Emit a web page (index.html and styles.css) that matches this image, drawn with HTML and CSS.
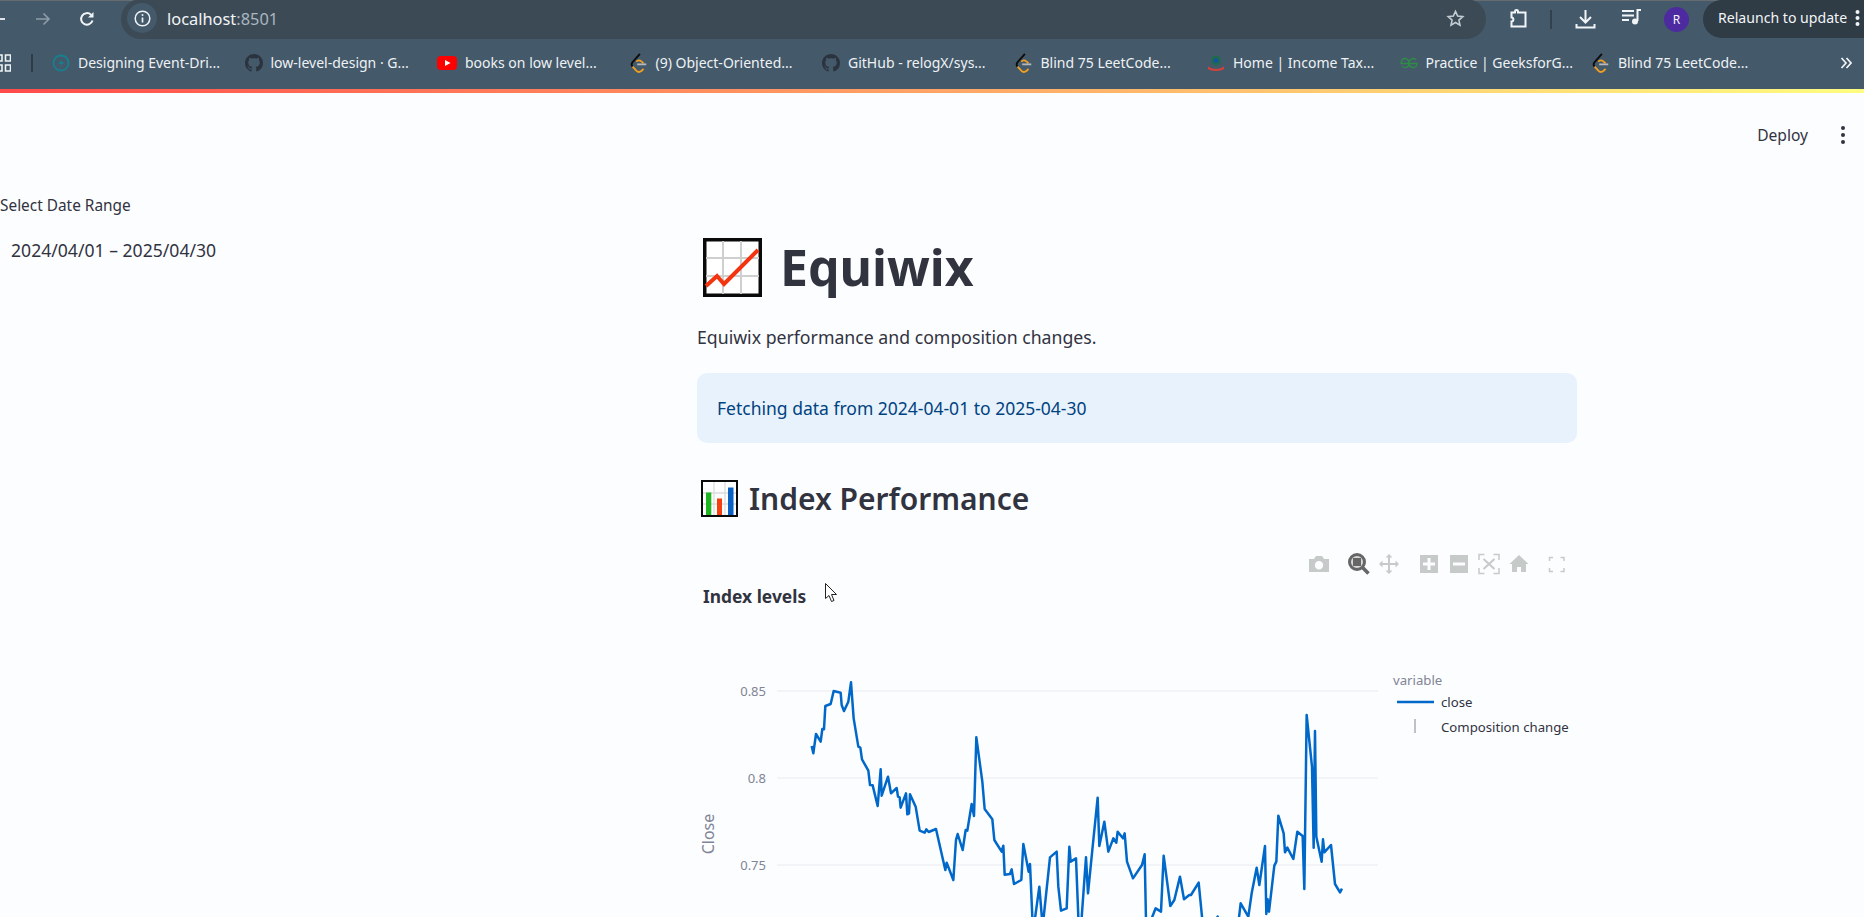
FILE: index.html
```html
<!DOCTYPE html>
<html lang="en">
<head>
    <meta charset="UTF-8">
    <meta name="viewport" content="width=device-width, initial-scale=1.0">
    <title>Equiwix</title>
    <link rel="stylesheet" href="styles.css">
</head>
<body>
    <svg class="defs" width="0" height="0">
        <symbol id="ic-github" viewBox="0 0 16 16">
            <path fill="#2b333f" d="M8 0C3.58 0 0 3.58 0 8c0 3.54 2.29 6.53 5.47 7.59.4.07.55-.17.55-.38 0-.19-.01-.82-.01-1.49-2.01.37-2.53-.49-2.69-.94-.09-.23-.48-.94-.82-1.13-.28-.15-.68-.52-.01-.53.63-.01 1.08.58 1.23.82.72 1.21 1.87.87 2.33.66.07-.52.28-.87.51-1.07-1.78-.2-3.64-.89-3.64-3.95 0-.87.31-1.59.82-2.15-.08-.2-.36-1.02.08-2.12 0 0 .67-.21 2.2.82.64-.18 1.32-.27 2-.27.68 0 1.36.09 2 .27 1.53-1.04 2.2-.82 2.2-.82.44 1.1.16 1.92.08 2.12.51.56.82 1.27.82 2.15 0 3.07-1.87 3.75-3.65 3.95.29.25.54.73.54 1.48 0 1.07-.01 1.93-.01 2.2 0 .21.15.46.55.38A8.013 8.013 0 0016 8c0-4.42-3.58-8-8-8z"/>
        </symbol>
        <symbol id="ic-leet" viewBox="0 0 18 22">
            <path d="M10 1 2 10c-1.5 1.8-1.5 3.4 0 5" fill="none" stroke="#0c0c0c" stroke-width="2"/>
            <path d="M2 15l4 4.500c1.600 1.600 4 1.600 6 0l2-2" fill="none" stroke="#f0a020" stroke-width="2"/>
            <path d="M6 9.500c1.500-1.600 4-1.600 6 0l2 2" fill="none" stroke="#f0a020" stroke-width="2"/>
            <path d="M7 12.500h10" stroke="#b4b8bc" stroke-width="2"/>
        </symbol>
    </svg>

    <div class="window">
        <header class="chrome">
            <div class="toolbar">
                <svg class="tb-back" width="6" height="16" viewBox="0 0 6 16"><path d="M0 8h5" stroke="#eef2f5" stroke-width="1.800"/></svg>
                <svg class="tb-forward" width="16" height="16" viewBox="0 0 16 16"><path d="M1 8h13M8.500 2.500 14 8l-5.500 5.500" fill="none" stroke="#8f9ca8" stroke-width="1.600"/></svg>
                <svg class="tb-reload" width="16" height="16" viewBox="0 0 16 16"><path d="M13.500 9.500A5.800 5.800 0 1 1 12 3.800" fill="none" stroke="#f2f5f7" stroke-width="2"/><path d="M14.500 1v5.500H9z" fill="#f2f5f7"/></svg>
                <div class="omnibox">
                    <span class="site-info">
                        <svg width="17" height="17" viewBox="0 0 17 17"><circle cx="8.500" cy="8.500" r="7.300" fill="none" stroke="#f0f3f5" stroke-width="1.500"/><path d="M8.500 7.500v5" stroke="#f0f3f5" stroke-width="1.700"/><circle cx="8.500" cy="5" r="1" fill="#f0f3f5"/></svg>
                    </span>
                    <span class="url">localhost<span class="url-port">:8501</span></span>
                    <svg class="star" width="19" height="19" viewBox="0 0 24 24"><path d="M12 3l2.700 6 6.500.7-4.900 4.300 1.400 6.400-5.700-3.300-5.700 3.300 1.400-6.400L2.800 9.700 9.300 9z" fill="none" stroke="#c3ccd3" stroke-width="2"/></svg>
                </div>
                <svg class="tb-ext" width="20" height="20" viewBox="0 0 19 20"><path d="M6.500 3.500V2.300c0-1.600 3-1.600 3 0v1.200h7.500v14H3v-5c2.500 0 2.500-4 0-4v-5z" fill="none" stroke="#f2f5f7" stroke-width="2"/></svg>
                <span class="tb-divider"></span>
                <svg class="tb-download" width="21" height="21" viewBox="0 0 21 21"><path d="M10.500 1v12M5 8l5.500 5.500L16 8" fill="none" stroke="#f2f5f7" stroke-width="2"/><path d="M1.500 15v3.500h18V15" fill="none" stroke="#f2f5f7" stroke-width="2"/></svg>
                <svg class="tb-music" width="19" height="16" viewBox="0 0 19 16"><path d="M0 2h12M0 6.500h12M0 11h7" stroke="#f2f5f7" stroke-width="2"/><path d="M15.500 12V1H19" fill="none" stroke="#f2f5f7" stroke-width="2"/><circle cx="13" cy="12.500" r="3" fill="#f2f5f7"/></svg>
                <span class="avatar">R</span>
                <div class="relaunch">
                    <span>Relaunch to update</span>
                    <svg width="5" height="18" viewBox="0 0 5 18"><circle cx="2.500" cy="3" r="2" fill="#f2f5f7"/><circle cx="2.500" cy="9" r="2" fill="#f2f5f7"/><circle cx="2.500" cy="15" r="2" fill="#f2f5f7"/></svg>
                </div>
            </div>

            <nav class="bookmarks">
                <svg class="apps" width="11" height="18" viewBox="0 0 11 18"><path d="M-4 1h6v6h-6zM5.500 1h5v6h-5zM-4 11h6v6h-6zM5.500 11h5v6h-5z" fill="none" stroke="#eef2f5" stroke-width="1.600"/></svg>
                <span class="bm-divider"></span>
                <div class="bm-list">
                    <a class="bookmark">
                        <svg width="18" height="18" viewBox="0 0 18 18"><circle cx="9" cy="9" r="7.500" fill="none" stroke="#16808f" stroke-width="1.800"/><path d="M10.500 4 6.500 10h3l-1.500 4 4-6H9z" fill="#16808f"/></svg>
                        <span>Designing Event-Dri...</span>
                    </a>
                    <a class="bookmark">
                        <svg width="18" height="18"><use href="#ic-github"/></svg>
                        <span>low-level-design · G...</span>
                    </a>
                    <a class="bookmark">
                        <svg width="20" height="18" viewBox="0 0 20 18"><rect y="2" width="20" height="14" rx="4" fill="#f00"/><path d="M8 6l5.500 3L8 12z" fill="#fff"/></svg>
                        <span>books on low level...</span>
                    </a>
                    <a class="bookmark">
                        <svg width="18" height="20"><use href="#ic-leet"/></svg>
                        <span>(9) Object-Oriented...</span>
                    </a>
                    <a class="bookmark">
                        <svg width="18" height="18"><use href="#ic-github"/></svg>
                        <span>GitHub - relogX/sys...</span>
                    </a>
                    <a class="bookmark">
                        <svg width="18" height="20"><use href="#ic-leet"/></svg>
                        <span>Blind 75 LeetCode...</span>
                    </a>
                    <a class="bookmark">
                        <svg width="18" height="18" viewBox="0 0 18 18"><circle cx="9" cy="6.500" r="5" fill="#1c6e4a"/><circle cx="9" cy="6.500" r="2.500" fill="#1d4fa0"/><path d="M1 12c2 4 14 4 16 0v3c-3 2.500-13 2.500-16 0z" fill="#d8403a"/></svg>
                        <span>Home | Income Tax...</span>
                    </a>
                    <a class="bookmark">
                        <svg width="18" height="18" viewBox="0 0 18 18"><path d="M9 9.500h8c-.3 3-2 4-3.800 4-2.200 0-4.200-2-4.200-4.500S7 4.500 4.800 4.500C3 4.500 1.300 5.500 1 9.500h8M9 9c0-2.500 2-4.500 4.200-4.500 1.200 0 2.300.5 3 1.500M9 9.500c0 2.500-2 4-4.200 4-1.200 0-2.300-.5-3-1.500" fill="none" stroke="#2f8d46" stroke-width="1.300"/></svg>
                        <span>Practice | GeeksforG...</span>
                    </a>
                    <a class="bookmark">
                        <svg width="18" height="20"><use href="#ic-leet"/></svg>
                        <span>Blind 75 LeetCode...</span>
                    </a>
                </div>
                <svg class="bm-more" width="12" height="12" viewBox="0 0 12 12"><path d="M1.500 1 6 6l-4.500 5M6.500 1 11 6l-4.500 5" fill="none" stroke="#f2f5f7" stroke-width="1.700"/></svg>
            </nav>
        </header>

        <div class="decoration"></div>

        <div class="page">
            <div class="app-header">
                <span class="deploy">Deploy</span>
                <svg class="app-menu" width="6" height="18" viewBox="0 0 6 18"><circle cx="3" cy="2" r="2" fill="#31333f"/><circle cx="3" cy="9" r="2" fill="#31333f"/><circle cx="3" cy="16" r="2" fill="#31333f"/></svg>
            </div>

            <div class="app-body">
                <aside class="sidebar">
                    <label class="date-label">Select Date Range</label>
                    <div class="date-value">2024/04/01 – 2025/04/30</div>
                </aside>

                <main class="content">
                    <h1 class="title">
                        <svg class="title-emoji" width="59" height="59" viewBox="0 0 59 59">
                            <rect x="1.750" y="1.750" width="55.500" height="55.500" fill="#fff" stroke="#0a0a0a" stroke-width="3.500"/>
                            <path d="M20 3v53M38 3v53M3 20h53M3 38h53" stroke="#cfcfcf" stroke-width="2"/>
                            <path d="M3 48 14 38l7 8L55 12" fill="none" stroke="#f4330f" stroke-width="4"/>
                        </svg>
                        Equiwix
                    </h1>
                    <p class="subtitle">Equiwix performance and composition changes.</p>
                    <div class="info-box">Fetching data from 2024-04-01 to 2025-04-30</div>
                    <h2 class="section">
                        <svg class="section-emoji" width="37" height="37" viewBox="0 0 37 37">
                            <rect x="1" y="1" width="35" height="35" fill="#fff" stroke="#0a0a0a" stroke-width="2"/>
                            <path d="M13 2v33M24 2v33M2 13h33M2 24h33" stroke="#dcdcdc" stroke-width="1.300"/>
                            <rect x="5" y="12.500" width="5.300" height="22.500" fill="#1fb51f"/>
                            <rect x="16" y="18.500" width="5" height="16.500" fill="#f4400f"/>
                            <rect x="27" y="7.500" width="5.500" height="27.500" fill="#0a63c4"/>
                        </svg>
                        Index Performance
                    </h2>

                    <svg class="chart" width="880" height="400" viewBox="0 0 880 400">
                        <!-- modebar -->
                        <g class="modebar">
                            <path fill-rule="evenodd" d="M612 19h5l2-3h6l2 3h5v13h-20zM622 21a4.200 4.200 0 1 0 0 8.400 4.200 4.200 0 0 0 0-8.400z"/>
                            <path d="M692 14l3.500 3.500h-2.500v5.500h5.500v-2.500l3.500 3.500-3.500 3.500v-2.500h-5.500v5.500h2.500l-3.500 3.500-3.500-3.500h2.500v-5.500h-5.500v2.500l-3.500-3.500 3.500-3.500v2.500h5.500v-5.500h-2.500z"/>
                            <path fill-rule="evenodd" d="M723 15h18v18h-18zM730.500 18v4.500H726v3h4.500V30h3v-4.500h4.500v-3h-4.500V18z"/>
                            <path fill-rule="evenodd" d="M753 15h18v18h-18zM756 22.500v3h12v-3z"/>
                            <path d="M822 15l9.500 9h-2.500v8h-5v-5h-4v5h-5v-8h-2.500z"/>
                        </g>
                        <g class="modebar-outline">
                            <path d="M782 20v-5.500h5.500M796.500 14.500h5.500V20M802 28v5.500h-5.500M787.500 33.500H782V28"/>
                            <path d="M852.500 21v-3.500h3.500M863.500 17.500h3.500V21M867 28v3.500h-3.500M856 31.500h-3.500V28"/>
                        </g>
                        <path class="modebar-x" d="M786.500 19l11 10M797.500 19l-11 10"/>
                        <circle cx="660" cy="22" r="7.500" fill="#d8d8d8" stroke="#666" stroke-width="3"/>
                        <rect x="656" y="18" width="8" height="8" fill="#666"/>
                        <path d="M665.500 27.500l6 6" stroke="#666" stroke-width="3.500"/>

                        <text class="chart-title" x="6" y="63">Index levels</text>

                        <!-- grid -->
                        <path class="grid" d="M80 151h601M80 238h601M80 325h601"/>
                        <text class="tick" x="69" y="156">0.85</text>
                        <text class="tick" x="69" y="243">0.8</text>
                        <text class="tick" x="69" y="330">0.75</text>
                        <text class="axis-title" transform="translate(17 294) rotate(-90)">Close</text>

                        <!-- line, points taken at 3x so they are scaled back down -->
                        <polyline class="series" transform="translate(-7 120) scale(.33333)" points="365,258 370,280 378,222 392,245 397,207 402,208 406,138 422,132 431,93 452,98 455,135 462,153 475,125 483,67 491,175 505,260 511,263 516,298 535,332 540,375 548,376 563,438 572,328 575,407 594,350 603,400 620,384 624,410 629,412 632,443 648,400 652,463 657,460 660,403 677,440 689,512 704,518 709,508 716,516 738,507 766,630 770,608 790,660 798,540 803,522 818,570 827,510 832,512 845,432 852,468 859,232 877,365 884,447 907,478 913,540 935,575 940,557 944,644 960,642 965,628 972,672 994,660 1000,552 1016,635 1020,612 1027,770 1033,790 1048,680 1058,800 1080,592 1100,575 1105,680 1113,752 1130,745 1138,560 1142,605 1158,595 1165,770 1173,800 1188,592 1194,700 1208,560 1223,413 1228,558 1243,485 1255,575 1270,535 1279,548 1283,515 1299,535 1304,520 1311,605 1329,655 1356,615 1364,583 1368,780 1378,790 1385,775 1397,745 1413,755 1421,587 1441,738 1453,720 1470,650 1482,718 1498,705 1503,705 1526,668 1536,770 1545,800 1570,790 1583,770 1590,800 1630,800 1645,790 1652,730 1675,770 1685,700 1700,623 1708,675 1725,558 1729,762 1733,718 1737,755 1753,617 1759,605 1765,467 1781,520 1785,577 1792,563 1810,597 1822,515 1838,528 1843,687 1850,165 1866,320 1871,563 1875,213 1879,530 1895,605 1899,538 1903,577 1923,555 1935,672 1950,697 1956,686"/>

                        <!-- legend -->
                        <text class="legend-title" x="696" y="145">variable</text>
                        <path class="legend-line" d="M700 162h37"/>
                        <text class="legend-item" x="744" y="167">close</text>
                        <path class="legend-tick" d="M718 179v14"/>
                        <text class="legend-item" x="744" y="192">Composition change</text>

                        <!-- mouse pointer -->
                        <path class="pointer" d="M128.500 43.500v15l3.500-3 2.500 6 2.500-1-2.500-6h5z"/>
                    </svg>
                </main>
            </div>
        </div>
    </div>
</body>
</html>
```
FILE: styles.css
```css
* {
    box-sizing: border-box;
}

html, body {
    margin: 0;
    height: 100%;
    overflow: hidden;
}
body {
    font-family: "Noto Sans", sans-serif;
    color: #31333f;
    background: #fcfdff;
}

.defs {
    position: absolute;
}
.window {
    display: flex;
    flex-direction: column;
    height: 100vh;
    overflow: hidden;
}

/* browser chrome */
.chrome {
    background: #44596a;
    color: #f2f5f7;
}
.toolbar {
    display: flex;
    align-items: center;
    height: 39px;
    padding-bottom: 2px;
    border-top: 1px solid #666b70;
}
.toolbar > svg {
    flex: none;
}
.tb-forward {
    margin-left: 29px;
}
.tb-reload {
    margin-left: 28px;
}
.omnibox {
    display: flex;
    align-items: center;
    align-self: flex-start;
    width: 1365px;
    height: 40px;
    margin-top: -2px;
    margin-left: 26px;
    padding: 0 21px 2px 6px;
    border-radius: 20px;
    background: #3c4a56;
}
.site-info {
    display: flex;
    align-items: center;
    justify-content: center;
    width: 30px;
    height: 30px;
    border-radius: 50%;
    background: #44596a;
}
.url {
    margin-left: 10px;
    font-size: 16.400px;
    color: #f2f5f7;
}
.url-port {
    color: #aab6c0;
}
.star {
    margin-left: auto;
}
.tb-ext {
    margin-left: 22px;
}
.tb-divider {
    width: 2px;
    height: 19px;
    margin-left: 22px;
    background: #33414d;
}
.tb-download {
    margin-left: 23px;
}
.tb-music {
    margin-left: 26px;
    margin-top: -4px;
}
.avatar {
    display: flex;
    align-items: center;
    justify-content: center;
    width: 25px;
    height: 25px;
    margin-left: 23px;
    border-radius: 50%;
    background: #4d2aa0;
    font-size: 12px;
}
.relaunch {
    display: flex;
    align-items: center;
    flex: 1;
    align-self: flex-start;
    height: 38px;
    margin-top: -1px;
    margin-left: 14px;
    padding: 0 0 3px 15px;
    border-radius: 19px 0 0 19px;
    background: #2f3b45;
    font-size: 14.100px;
    white-space: nowrap;
}
.relaunch svg {
    margin-left: 8px;
}

.bookmarks {
    display: flex;
    align-items: center;
    height: 50px;
    padding-bottom: 3px;
}
.bm-divider {
    width: 2px;
    height: 18px;
    margin-left: 20px;
    background: #2f3b45;
}
.bm-list {
    display: flex;
    margin-left: 19px;
}
.bookmark {
    display: flex;
    align-items: center;
    gap: 8px;
    width: 192.500px;
    font-size: 14px;
    white-space: nowrap;
    color: #eef2f5;
}
.bookmark svg {
    flex: none;
}
.bm-more {
    margin-left: 55px;
}

.decoration {
    height: 4px;
    background: linear-gradient(90deg, #ff4b4b, #fffd80);
}

/* streamlit page */
.page {
    flex: 1;
    min-height: 0;
}
.app-header {
    display: flex;
    align-items: center;
    justify-content: flex-end;
    height: 84px;
    padding: 0 18px 0 0;
}
.deploy {
    margin-right: 32px;
    font-size: 15.600px;
}
.app-body {
    display: grid;
    grid-template-columns: 697px 880px;
}
.sidebar {
    padding-top: 19px;
}
.date-label {
    display: block;
    font-size: 15.400px;
    line-height: 20px;
}
.date-value {
    margin-top: 23px;
    padding-left: 11px;
    font-size: 17.600px;
    line-height: 22px;
}

.title {
    display: flex;
    align-items: center;
    gap: 18px;
    height: 59px;
    margin: 61px 0 0;
    padding-left: 6px;
    font-size: 50px;
    font-weight: 700;
    line-height: 59px;
}
.subtitle {
    margin: 28px 0 0;
    font-size: 17.700px;
    line-height: 24px;
}
.info-box {
    display: flex;
    align-items: center;
    height: 70px;
    margin-top: 24px;
    padding: 0 20px;
    border-radius: 10px;
    background: #e8f2fc;
    color: #004280;
    font-size: 17.500px;
}
.section {
    display: flex;
    align-items: center;
    gap: 11px;
    height: 37px;
    margin: 37px 0 0;
    padding-left: 4px;
    font-size: 30px;
    font-weight: 600;
    line-height: 37px;
}
.chart {
    display: block;
    margin-top: 23px;
}

/* chart parts */
.modebar {
    fill: #c6cac9;
}
.modebar-outline {
    fill: none;
    stroke: #c6cac9;
    stroke-width: 1.500;
}
.modebar-x {
    fill: none;
    stroke: #c6cac9;
    stroke-width: 2;
}
.chart-title {
    font-size: 17.400px;
    font-weight: 700;
    fill: #31333f;
}
.grid {
    stroke: #e8ebf2;
    stroke-width: 1.200;
    fill: none;
}
.tick {
    font-size: 13px;
    text-anchor: end;
    fill: #808495;
}
.axis-title {
    font-size: 16px;
    text-anchor: middle;
    fill: #808495;
}
.series {
    fill: none;
    stroke: #0068c9;
    stroke-width: 7.500;
    stroke-linejoin: round;
}
.legend-title {
    font-size: 13.200px;
    fill: #808495;
}
.legend-line {
    stroke: #0068c9;
    stroke-width: 2.500;
}
.legend-tick {
    stroke: #808495;
    stroke-width: 1;
}
.legend-item {
    font-size: 13.200px;
    fill: #31333f;
}
.pointer {
    fill: #fff;
    stroke: #222;
    stroke-width: 1;
}
```
